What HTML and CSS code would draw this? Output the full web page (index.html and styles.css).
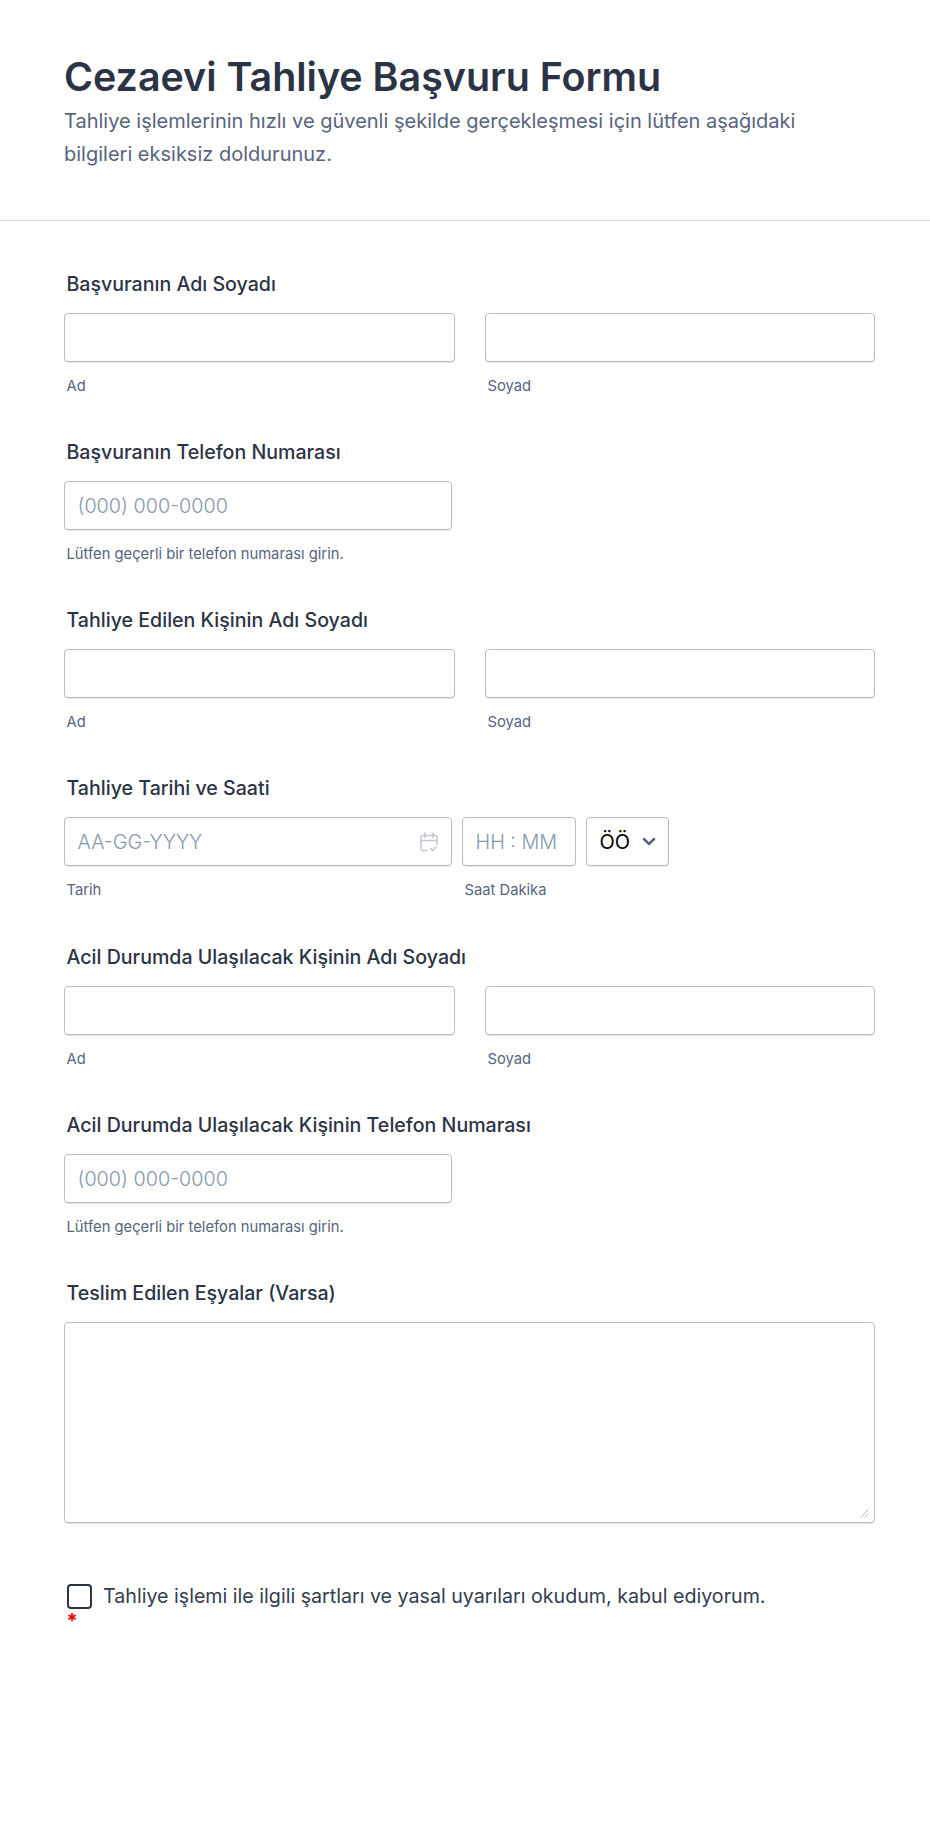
FILE: index.html
```html
<!DOCTYPE html>
<html lang="tr">
<head>
<meta charset="utf-8">
<title>Cezaevi Tahliye Başvuru Formu</title>
<link rel="stylesheet" href="styles.css">
</head>
<body>
<header class="header">
  <h1 class="title">Cezaevi Tahliye Başvuru Formu</h1>
  <p class="subtitle">Tahliye işlemlerinin hızlı ve güvenli şekilde gerçekleşmesi için lütfen aşağıdaki bilgileri eksiksiz doldurunuz.</p>
</header>
<form class="form">
  <section class="field">
    <label class="label">Başvuranın Adı Soyadı</label>
    <div class="two">
      <div><input class="input" type="text"><span class="sub">Ad</span></div>
      <div><input class="input" type="text"><span class="sub">Soyad</span></div>
    </div>
  </section>
  <section class="field">
    <label class="label">Başvuranın Telefon Numarası</label>
    <div class="phone"><input class="input" type="text" placeholder="(000) 000-0000"><span class="sub">Lütfen geçerli bir telefon numarası girin.</span></div>
  </section>
  <section class="field">
    <label class="label">Tahliye Edilen Kişinin Adı Soyadı</label>
    <div class="two">
      <div><input class="input" type="text"><span class="sub">Ad</span></div>
      <div><input class="input" type="text"><span class="sub">Soyad</span></div>
    </div>
  </section>
  <section class="field">
    <label class="label">Tahliye Tarihi ve Saati</label>
    <div class="datetime">
      <div class="date">
        <div class="wrap">
          <input class="input" type="text" placeholder="AA-GG-YYYY">
          <svg class="cal" width="18" height="20" viewBox="0 0 18 20" fill="none" stroke="#c3c7d4" stroke-width="1.600" stroke-linecap="round" stroke-linejoin="round"><path d="M7 18.500H2.800A1.800 1.800 0 0 1 1 16.700V5.300A1.800 1.800 0 0 1 2.800 3.500h12.400A1.800 1.800 0 0 1 17 5.300v7.200M1 8.500h16M5 1v4.500M13 1v4.500M10.500 16.500l2 2 3.500-3.500"/></svg>
        </div>
        <span class="sub">Tarih</span>
      </div>
      <div class="time"><input class="input" type="text" placeholder="HH : MM"><span class="sub">Saat Dakika</span></div>
      <div class="ampm">
        <select class="select"><option>ÖÖ</option><option>ÖS</option></select>
        <svg class="chev" width="14" height="9" viewBox="0 0 14 9" fill="none" stroke="#5c6480" stroke-width="2.500" stroke-linecap="round" stroke-linejoin="round"><path d="M2 2l5 5 5-5"/></svg>
      </div>
    </div>
  </section>
  <section class="field">
    <label class="label">Acil Durumda Ulaşılacak Kişinin Adı Soyadı</label>
    <div class="two">
      <div><input class="input" type="text"><span class="sub">Ad</span></div>
      <div><input class="input" type="text"><span class="sub">Soyad</span></div>
    </div>
  </section>
  <section class="field">
    <label class="label">Acil Durumda Ulaşılacak Kişinin Telefon Numarası</label>
    <div class="phone"><input class="input" type="text" placeholder="(000) 000-0000"><span class="sub">Lütfen geçerli bir telefon numarası girin.</span></div>
  </section>
  <section class="field field-area">
    <label class="label">Teslim Edilen Eşyalar (Varsa)</label>
    <div class="area-wrap">
      <textarea class="area"></textarea>
      <svg class="grip" width="9" height="9" viewBox="0 0 9 9" fill="none" stroke="#b8bdc9" stroke-width="1"><path d="M.5 8.500l8-8M4.500 8.500l4-4"/></svg>
    </div>
  </section>
  <section class="agree">
    <div class="agree-row">
      <input class="check" type="checkbox">
      <span class="agree-text">Tahliye işlemi ile ilgili şartları ve yasal uyarıları okudum, kabul ediyorum.</span>
    </div>
    <span class="star">*</span>
  </section>
</form>
</body>
</html>
```
FILE: styles.css
```css
* { box-sizing: border-box; }
html, body { margin: 0; padding: 0; background: #fff; }
body {
  width: 930px;
  height: 1839px;
  overflow: hidden;
  font-family: Inter, "Noto Sans", sans-serif;
  color: #2c3345;
}
.header {
  height: 221px;
  padding: 53px 64px 0;
  border-bottom: 1px solid #dadee6;
}
.title {
  margin: 0;
  font-size: 39.400px;
  line-height: 48px;
  font-weight: 600;
  color: #2c3345;
}
.subtitle {
  margin: 0;
  padding-top: 4px;
  width: 770px;
  font-size: 20px;
  line-height: 33px;
  color: #57647e;
}
.form { padding: 48px 55px 0 64px; }
.field { height: 168.150px; }
.field-area { height: 255px; }
.label {
  display: block;
  height: 44px;
  padding-left: 2.500px;
  font-size: 19.600px;
  line-height: 30px;
  font-weight: 500;
  color: #2c3345;
}
.two {
  display: grid;
  grid-template-columns: 390.500px 390px;
  gap: 30.500px;
}
.phone { width: 388px; }
.input, .select {
  display: block;
  width: 100%;
  height: 49px;
  padding: 1px 12.500px 0;
  border: 1px solid #b8bdc9;
  border-radius: 4px;
  box-shadow: 0 1px 0 rgba(184, 189, 201, .35);
  background: #fff;
  font-family: inherit;
  font-size: 19.800px;
  outline: none;
}
.input::placeholder { color: #8399ac; opacity: 1; font-weight: 300; }
.sub {
  display: block;
  margin-top: 15px;
  padding-left: 2.500px;
  font-size: 14.750px;
  line-height: 18px;
  color: #57647e;
}
.datetime { display: flex; gap: 10px; }
.date { width: 388px; }
.time { width: 114px; }
.ampm { position: relative; width: 83px; height: 49px; }
.wrap { position: relative; }
.cal { position: absolute; right: 14px; top: 15px; }
.select {
  appearance: none;
  -webkit-appearance: none;
  color: #000;
  font-size: 20px;
}
.chev { position: absolute; right: 13px; top: 20px; pointer-events: none; }
.area-wrap { position: relative; width: 811px; }
.area {
  display: block;
  width: 811px;
  height: 201px;
  border: 1px solid #b8bdc9;
  border-radius: 4px;
  box-shadow: 0 1px 0 rgba(184, 189, 201, .35);
  background: #fff;
  outline: none;
  resize: none;
}
.grip { position: absolute; right: 6px; bottom: 5px; pointer-events: none; }
.agree { padding: 0 0 0 2.500px; margin-top: 51.500px; }
.agree-row { display: flex; align-items: flex-start; gap: 11.500px; }
.check {
  appearance: none;
  -webkit-appearance: none;
  flex: none;
  width: 25px;
  height: 25px;
  margin: 0;
  border: 2px solid #2c3345;
  border-radius: 4px;
  background: #fff;
}
.agree-text { font-size: 19.650px; line-height: 24px; color: #343c50; }
.star {
  display: block;
  height: 18px;
  margin-top: 3px;
  font-size: 20px;
  line-height: 18px;
  font-weight: 700;
  color: #f00;
}
```
